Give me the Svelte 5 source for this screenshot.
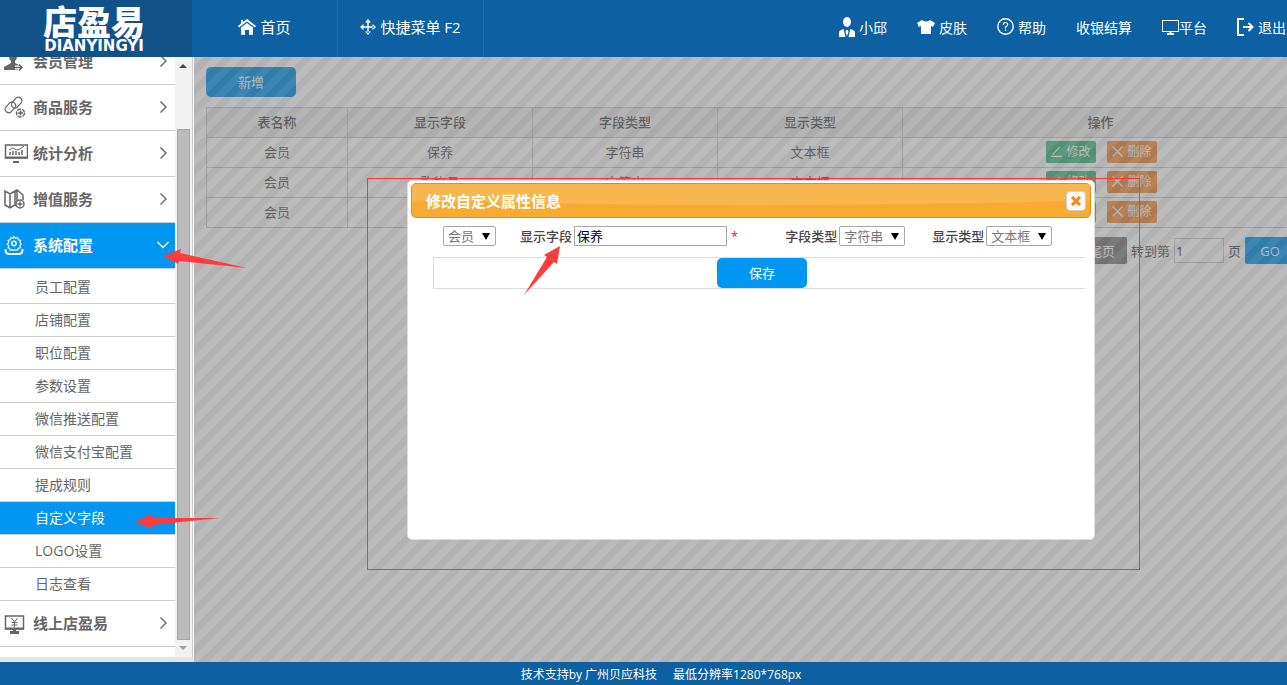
<script>
  const menuTop = [
    { label: '会员管理', icon: 'member' },
    { label: '商品服务', icon: 'goods' },
    { label: '统计分析', icon: 'chart' },
    { label: '增值服务', icon: 'map' },
    { label: '系统配置', icon: 'gear', open: true }
  ];

  const subItems = [
    '员工配置', '店铺配置', '职位配置', '参数设置', '微信推送配置',
    '微信支付宝配置', '提成规则', '自定义字段', 'LOGO设置', '日志查看'
  ];
  const activeSub = '自定义字段';

  const rows = [
    ['会员', '保养', '字符串', '文本框'],
    ['会员', '购物员', '字符串', '文本框'],
    ['会员', '', '', '']
  ];

  let fieldName = $state('保养');
  let pageNo = $state('1');
</script>

{#snippet menuIcon(name)}
  <svg class="menu-icon" width="24" height="24" viewBox="0 0 24 24" fill="none" stroke="currentColor" stroke-width="1.5">
    {#if name === 'member'}
      <path d="M9 2c3 0 4 2 4 5s-1 4-2 5v2l4 2v5H0v-3l7-4v-2C6 11 5 10 5 7s1-5 4-5z" fill="currentColor" stroke="none" />
      <path d="M11 18.500h7m-3-3 3 3-3 3" stroke="#fff" stroke-width="4" />
      <path d="M11 18.500h7m-3-3 3 3-3 3" />
    {:else if name === 'goods'}
      <rect x="7" y="4" width="12" height="7" rx="3.500" transform="rotate(-48 13 8)" stroke-width="1.200" />
      <rect x="0" y="9" width="12" height="7" rx="3.500" transform="rotate(-48 6 12)" stroke-width="1.200" />
      <circle cx="16.500" cy="18" r="4" fill="#fff" stroke-dasharray="4 1" />
      <path d="M16.500 15.500v5m-2.500-2.500h5" />
    {:else if name === 'chart'}
      <rect x="1.500" y="4" width="22" height="13" />
      <path d="M1 16.500h23" stroke-width="2" />
      <path d="M9 21h6" stroke-width="2" />
      <path d="M6 14v-3m3 3v-4m3 4v-4m3 4v-3m3 3V9" />
      <path d="m5 9 4-2 4 2 3-1 4-3" stroke-width="1" />
    {:else if name === 'map'}
      <path d="M1 4v14l5 3 5-3V4L6 7zM6 7v14M11 4l2-1 6 5v5M13 4v10M11 18l2 1" />
      <circle cx="16" cy="17" r="4" fill="#fff" />
      <path d="M16 14.500v5m-2.500-2.500h5" />
    {:else if name === 'gear'}
      <path d="m10 1 2 2 3-1 1 3 3 1-1 3 2 2-2 2 1 3-3 .5-1 2.500-3-.5-2 1-2-1-3 .5-1-2.500-2-.5 1-3-2-2 2-2-1-3 3-1 1-3 3 1z" transform="translate(2.500 3) scale(.74)" />
      <circle cx="10" cy="10.500" r="2.200" />
      <path d="M1.500 16v1q0 4 4 4h9q4 0 4-4v-1" stroke-width="2" />
    {:else}
      <rect x="1.500" y="5" width="18" height="13" />
      <path d="M1 17.500h19" stroke-width="2" />
      <path d="M10.500 18v3M6 21.500h9" stroke-width="3" />
      <path d="m7.500 7 3 4 3-4M10.500 11v5M7.500 11.500h6M7.500 14h6" stroke-width="1" />
    {/if}
  </svg>
{/snippet}

{#snippet menuItem(item)}
  <a class="menu-item" class:open={item.open} href="#{item.icon}">
    {@render menuIcon(item.icon)}
    <span>{item.label}</span>
    <svg class="chevron" width="14" height="14" viewBox="0 0 14 14" fill="none" stroke="currentColor" stroke-width="1.400">
      <path d={item.open ? 'M1.500 4l5.500 5.500L12.500 4' : 'M4.500 1.500l5.500 5.500-5.500 5.500'} />
    </svg>
  </a>
{/snippet}

{#snippet picker(label, value)}
  <span class="picker">
    <select aria-label={label}><option>{value}</option></select>
  </span>
{/snippet}

<div class="page">
  <header>
    <a class="logo" href="#home">
      <strong>店盈易</strong>
      <small>DIANYINGYI</small>
    </a>
    <nav class="left-nav">
      <a href="#home">
        <svg width="18" height="16" viewBox="0 0 18 16" fill="#fff">
          <path d="M9 0l9 7-1 1.500-8-6-8 6L0 7l3-2.500V1h2v2z" />
          <path d="M9 4l6 4.500V15q0 1-1 1h-3v-5H7v5H4q-1 0-1-1V8.500z" />
        </svg>
        首页
      </a>
      <a href="#quick">
        <svg width="16" height="16" viewBox="0 0 16 16" fill="#fff">
          <path d="M7.300 2h1.400v12H7.300zM2 7.300h12v1.400H2zM8 0l3 3.500H5zM8 16l3-3.500H5zM0 8l3.500-3v6zM16 8l-3.500-3v6z" />
        </svg>
        快捷菜单 F2
      </a>
    </nav>
    <nav class="right-nav">
      <a href="#user">
        <svg width="16" height="20" viewBox="0 0 16 20" fill="#fff">
          <ellipse cx="8" cy="5" rx="4" ry="5" />
          <path d="M4.500 12l2 8H0v-4q0-2.500 2-3zM11.500 12l-2 8H16v-4q0-2.500-2-3zM7 13h2l.5 2-1.500 4-1.500-4z" />
        </svg>
        小邱
      </a>
      <a href="#skin">
        <svg width="18" height="14" viewBox="0 0 18 14" fill="#fff">
          <path d="M5 0q4 3 8 0l5 3-2 4-2-1v8H4V6L2 7 0 3z" />
        </svg>
        皮肤
      </a>
      <a href="#help">
        <svg width="17" height="17" viewBox="0 0 17 17" fill="none" stroke="#fff" stroke-width="1.400">
          <circle cx="8.500" cy="8.500" r="7.700" />
          <path d="M6.300 6.800q0-2.300 2.200-2.300t2.200 2q0 1.200-2.200 2.500v1.500M8.500 11.500V13" stroke-width="1.200" />
        </svg>
        帮助
      </a>
      <a href="#cash">收银结算</a>
      <a href="#platform" class="tight">
        <svg width="17" height="16" viewBox="0 0 17 16" fill="none" stroke="#fff">
          <rect x=".5" y="1.500" width="16" height="11" />
          <path d="M8.500 12v3M5 15h7" stroke-width="2" />
        </svg>
        平台
      </a>
      <a href="#exit">
        <svg width="17" height="18" viewBox="0 0 17 18" fill="none" stroke="#fff" stroke-width="2">
          <path d="M7 1H1v16h6M6 9h10M11.500 5l4 4-4 4" />
        </svg>
        退出
      </a>
    </nav>
  </header>

  <div class="body">
    <aside>
      <div class="menu">
        {#each menuTop as item}
          {@render menuItem(item)}
        {/each}
        {#each subItems as sub}
          <a class="sub-item" class:active={sub === activeSub} href="#sub">{sub}</a>
        {/each}
        {@render menuItem({ label: '线上店盈易', icon: 'online' })}
      </div>
      <div class="scrollbar">
        <i class="up"></i>
        <div class="thumb"></div>
        <i class="down"></i>
      </div>
    </aside>

    <main>
      <div class="content">
        <button class="primary">新增</button>
        <table>
          <colgroup>
            <col class="c-first" /><col class="c-mid" /><col class="c-mid" /><col class="c-mid" /><col />
          </colgroup>
          <thead>
            <tr><th>表名称</th><th>显示字段</th><th>字段类型</th><th>显示类型</th><th>操作</th></tr>
          </thead>
          <tbody>
            {#each rows as row}
              <tr>
                {#each row as cell}<td>{cell}</td>{/each}
                <td>
                  <div class="actions">
                    <button class="edit">
                      <svg width="11" height="11" viewBox="0 0 11 11" fill="none" stroke="#fff"><path d="M0 10.500h11M2 8l7-7M1.500 8.500l1.500-.5" stroke-width="1.300" /></svg>
                      修改
                    </button>
                    <button class="remove">
                      <svg width="11" height="11" viewBox="0 0 11 11" fill="none" stroke="#fff" stroke-width="1.300"><path d="M.5.5l10 10M10.500.5l-10 10" /></svg>
                      删除
                    </button>
                  </div>
                </td>
              </tr>
            {/each}
          </tbody>
        </table>
        <div class="pager">
          <button class="last">尾页</button>
          <label for="page-no">转到第</label>
          <input id="page-no" bind:value={pageNo} />
          <span>页</span>
          <button class="go">GO</button>
        </div>
      </div>

      <div class="overlay"></div>

      <div class="dialog" role="dialog" aria-labelledby="dialog-title">
        <div class="title-bar">
          <svg class="gloss" viewBox="0 0 100 34" preserveAspectRatio="none"><path d="M0 0h100v17Q50 27 0 17z" fill="#f8b64f" /></svg>
          <h2 id="dialog-title">修改自定义属性信息</h2>
          <button class="close" aria-label="关闭">
            <svg width="10" height="10" viewBox="0 0 10 10" stroke="#ef8c08" stroke-width="3"><path d="M1 1l8 8M9 1L1 9" /></svg>
          </button>
        </div>
        <form>
          <div class="fields">
            {@render picker('表名称', '会员')}
            <div class="field">
              <label for="field-name">显示字段</label>
              <input id="field-name" bind:value={fieldName} />
              <span class="required">*</span>
            </div>
            <div class="field types">
              <span>字段类型</span>
              {@render picker('字段类型', '字符串')}
            </div>
            <div class="field">
              <span>显示类型</span>
              {@render picker('显示类型', '文本框')}
            </div>
          </div>
          <div class="save-row">
            <button type="button" class="primary">保存</button>
          </div>
        </form>
      </div>
    </main>
  </div>

  <footer>
    <span>技术支持by 广州贝应科技</span>
    <span>最低分辨率1280*768px</span>
  </footer>

  <svg class="marks" aria-hidden="true">
    <rect x="367.500" y="178.500" width="772" height="391" fill="none" stroke="#fb3838" />
    <g fill="#ff3b3b">
      <path d="M163 256l18-7-1 4 67 15-68-7-1 3z" />
      <path d="M135 522l16-8v4l69 0-68 7v4z" />
      <path d="M560 246l-16 9 3 2-23 38 30-33 3 2z" />
    </g>
  </svg>
</div>

<style>
  :global(body) {
    font-family: 'Open Sans', 'Noto Sans CJK SC', sans-serif;
    font-size: 13px;
    color: #555;
  }

  .page {
    position: relative;
    display: flex;
    flex-direction: column;
    height: 100vh;
    overflow: hidden;
  }

  a {
    color: inherit;
    text-decoration: none;
  }

  button,
  input,
  select {
    box-sizing: border-box;
    margin: 0;
    padding: 0;
    border: 0;
    font: inherit;
  }

  button {
    padding-bottom: 2px;
    color: #fff;
    cursor: pointer;
  }

  header {
    display: flex;
    flex: none;
    height: 57px;
    background: #0d60a1;
    color: #fff;
  }

  .logo {
    display: flex;
    flex-direction: column;
    align-items: center;
    flex: none;
    box-sizing: border-box;
    width: 192px;
    padding: 3px 4px 0 0;
    background: #115188;
  }

  .logo strong {
    font: 900 34px/36px 'Noto Sans CJK SC', sans-serif;
  }

  .logo small {
    font: bold 15px/15px 'DejaVu Sans', sans-serif;
  }

  .left-nav,
  .right-nav {
    display: flex;
    white-space: nowrap;
  }

  .left-nav a,
  .right-nav a {
    display: flex;
    align-items: center;
    gap: 4px;
    padding-bottom: 4px;
  }

  .left-nav a {
    box-sizing: border-box;
    width: 146px;
    justify-content: center;
    border-right: 1px solid #2470ad;
    font-size: 15px;
  }

  .right-nav {
    gap: 30px;
    margin-left: auto;
    padding-right: 1px;
    font-size: 14px;
  }

  .right-nav .tight {
    gap: 0;
  }

  .body {
    display: flex;
    flex: 1;
    min-height: 0;
  }

  aside {
    display: flex;
    flex: none;
    box-sizing: border-box;
    width: 194px;
    border-bottom: 5px solid #e4e4e4;
    background: #fff;
    overflow: hidden;
  }

  .menu {
    width: 175px;
    margin-top: -18px;
  }

  .menu-item {
    display: flex;
    align-items: center;
    box-sizing: border-box;
    height: 46px;
    padding: 0 5px 2px 4px;
    border-bottom: 1px solid #ccc;
    color: #666;
    font-size: 15px;
    font-weight: bold;
  }

  .menu-icon {
    margin-right: 5px;
  }

  .menu-item .chevron {
    margin-left: auto;
  }

  .menu-item.open,
  .sub-item.active {
    background: #0096f2;
    color: #fff;
  }

  .sub-item {
    display: block;
    box-sizing: border-box;
    height: 33px;
    padding-left: 35px;
    border-bottom: 1px solid #ccc;
    color: #666;
    font-size: 14px;
    line-height: 32px;
  }

  .menu-item.open + .sub-item {
    height: 35px;
    line-height: 36px;
  }

  .scrollbar {
    display: flex;
    flex-direction: column;
    width: 17px;
    border-right: 1px solid #ccc;
    background: #f1f1f1;
  }

  .scrollbar i {
    box-sizing: border-box;
    width: 8px;
    height: 11px;
    margin-left: 4px;
    border: solid transparent;
  }

  .scrollbar .up {
    margin-bottom: 61px;
    border-width: 7px 4px 4px;
    border-bottom-color: #444;
  }

  .scrollbar .down {
    margin-top: 6px;
    border-width: 4px 4px 7px;
    border-top-color: #a0a0a0;
  }

  .thumb {
    flex: 1;
    width: 11px;
    margin-left: 2px;
    border: 1px solid #a6a6a6;
    background: #bbb;
  }

  main {
    position: relative;
    flex: 1;
    min-width: 0;
    background: #fff;
    overflow: hidden;
  }

  .content {
    width: 100%;
    padding: 10px 0 0 12px;
  }

  .primary {
    display: block;
    width: 90px;
    height: 30px;
    border-radius: 5px;
    background: #0096f2;
  }

  table {
    width: 100%;
    margin-top: 10px;
    border-collapse: collapse;
    table-layout: fixed;
    text-align: center;
  }

  .c-first {
    width: 141px;
  }

  .c-mid {
    width: 185px;
  }

  th,
  td {
    box-sizing: border-box;
    height: 30px;
    padding: 0 0 2px;
    border: 1px solid #ccc;
    line-height: 20px;
  }

  th {
    background: #f2f2f2;
    font-weight: 500;
  }

  .actions {
    display: flex;
    justify-content: center;
    gap: 11px;
    padding-left: 2px;
  }

  .actions button {
    display: flex;
    align-items: center;
    justify-content: center;
    gap: 4px;
    width: 50px;
    height: 22px;
    padding: 0;
    border-radius: 2px;
    font-size: 12px;
  }

  .edit {
    background: #3ebb82;
  }

  .remove {
    background: #f98e3c;
  }

  .pager {
    display: flex;
    align-items: center;
    justify-content: flex-end;
    gap: 4px;
    box-sizing: border-box;
    width: 100%;
    margin-top: 9px;
    padding-right: 4px;
  }

  .pager button {
    height: 27px;
    padding: 0;
    border-radius: 2px;
  }

  .pager input {
    width: 50px;
    height: 25px;
    padding-left: 1px;
    border: 1px solid #ccc;
    background: none;
    color: #333;
  }

  .last {
    width: 50px;
    background: #808080;
  }

  .go {
    width: 50px;
    background: #0096f2;
  }

  .overlay {
    position: absolute;
    inset: 0;
    background: linear-gradient(135deg, #767676 25%, #646464 25% 50%, #767676 50% 75%, #646464 75%);
    background-size: 20px 20px;
    opacity: 0.5;
  }

  .dialog {
    position: absolute;
    top: 123px;
    left: 213px;
    box-sizing: border-box;
    width: 688px;
    height: 360px;
    padding: 2px 3px;
    border: 1px solid #ddd;
    border-radius: 5px;
    background: #fff;
  }

  .title-bar {
    position: relative;
    display: flex;
    align-items: center;
    justify-content: space-between;
    box-sizing: border-box;
    height: 35px;
    padding: 0 4px 0 14px;
    border: 1px solid #e78f08;
    border-radius: 5px;
    background: #f7ab33;
    overflow: hidden;
  }

  .gloss {
    position: absolute;
    inset: 0;
    width: 100%;
    height: 100%;
  }

  h2 {
    position: relative;
    margin: 0;
    color: #fff;
    font-size: 15px;
    font-weight: bold;
  }

  .close {
    position: relative;
    display: flex;
    align-items: center;
    justify-content: center;
    width: 20px;
    height: 20px;
    padding: 0;
    border: 1px solid #ccc;
    border-radius: 4px;
    background: #f9f9f9;
  }

  form {
    padding: 8px 6px 0 22px;
    color: #444;
  }

  .fields {
    display: flex;
    align-items: center;
    gap: 24px;
    padding-left: 10px;
    font-weight: 500;
  }

  .field {
    display: flex;
    align-items: center;
    gap: 2px;
    line-height: 20px;
  }

  .field input {
    width: 153px;
    height: 20px;
    padding-left: 2px;
    border: 1px solid #a9a9a9;
    color: #000;
    font-weight: normal;
  }

  .required {
    margin: 0 23px 0 2px;
    color: #f04;
  }

  .types {
    margin-right: 3px;
  }

  .picker {
    position: relative;
    display: flex;
  }

  .picker::after {
    position: absolute;
    top: 7px;
    right: 6px;
    border: 4px solid transparent;
    border-top: 7px solid #000;
    border-bottom: 0;
    content: '';
    pointer-events: none;
  }

  select {
    height: 20px;
    padding: 0 20px 0 4px;
    border: 1px solid #a9a9a9;
    border-radius: 2px;
    background: #fff;
    color: #777;
    font-weight: normal;
    line-height: 18px;
    appearance: none;
  }

  .save-row {
    display: flex;
    justify-content: center;
    margin-top: 11px;
    padding-left: 5px;
    border: solid #ddd;
    border-width: 1px 0 1px 1px;
  }

  footer {
    display: flex;
    flex: none;
    align-items: center;
    justify-content: center;
    gap: 16px;
    height: 23px;
    padding-left: 35px;
    background: #0d60a1;
    color: #fff;
    font-size: 12px;
  }

  .marks {
    position: absolute;
    inset: 0;
    width: 100%;
    height: 100%;
    pointer-events: none;
  }
</style>
